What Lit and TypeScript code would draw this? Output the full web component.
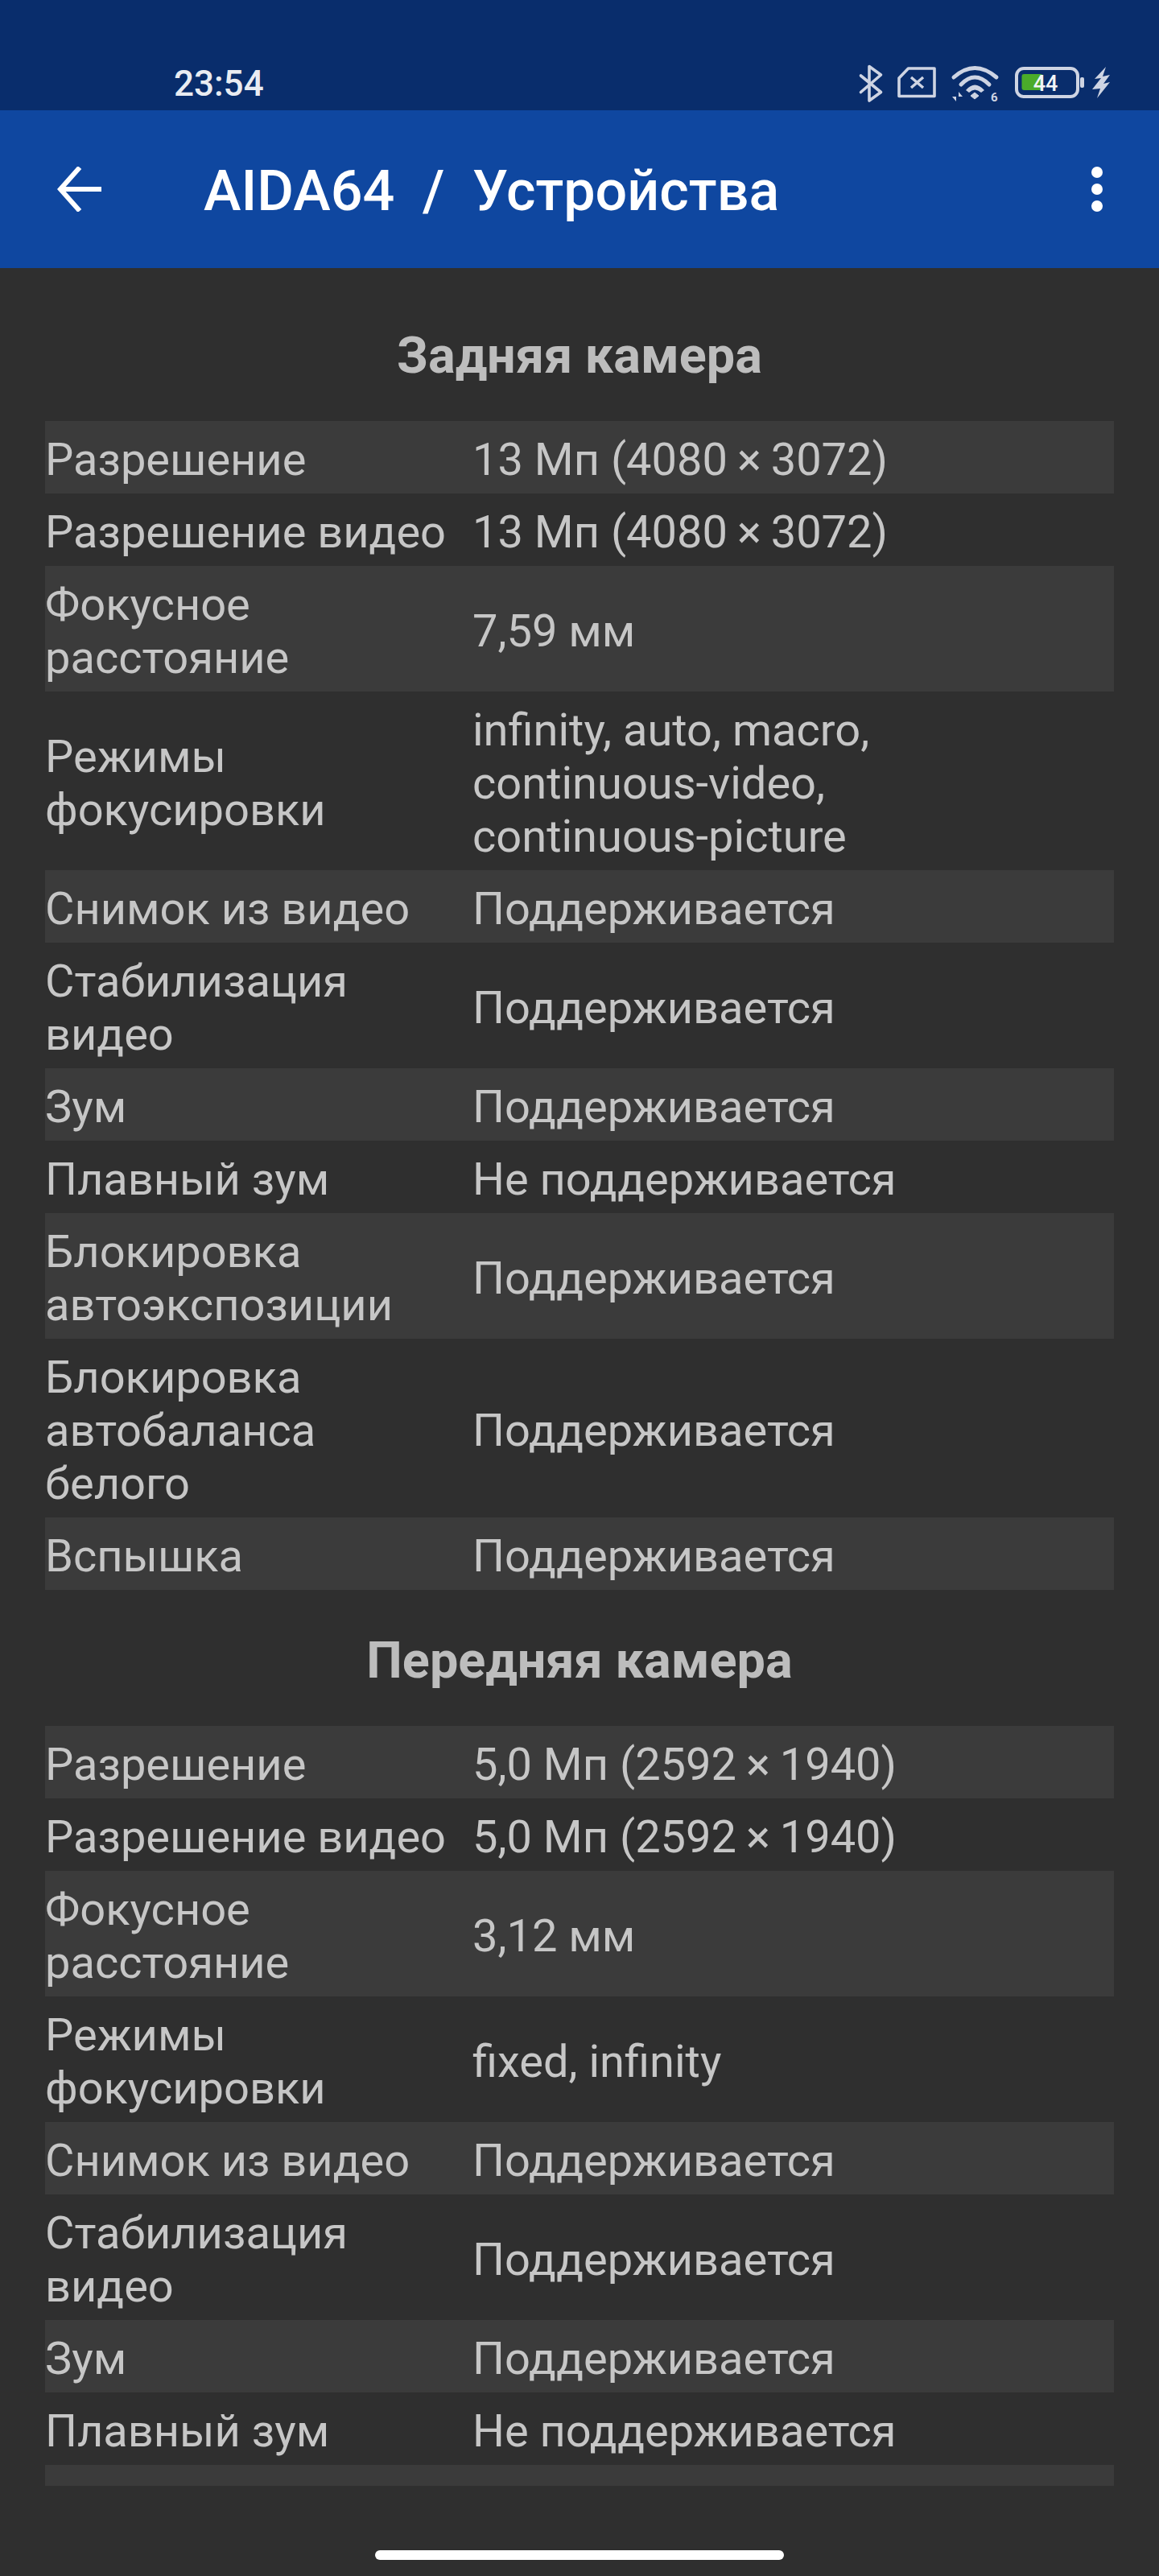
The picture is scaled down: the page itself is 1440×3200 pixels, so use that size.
import { html, css, LitElement, svg } from 'lit'
import { customElement } from 'lit/decorators.js'

const SUP = 'Поддерживается'
const NOSUP = 'Не поддерживается'

const rear = [
    ['Разрешение', '13 Мп (4080 × 3072)'],
    ['Разрешение видео', '13 Мп (4080 × 3072)'],
    ['Фокусное расстояние', '7,59 мм'],
    ['Режимы фокусировки', 'infinity, auto, macro, continuous-video, continuous-picture'],
    ['Снимок из видео', SUP],
    ['Стабилизация видео', SUP],
    ['Зум', SUP],
    ['Плавный зум', NOSUP],
    ['Блокировка автоэкспозиции', SUP],
    ['Блокировка автобаланса белого', SUP],
    ['Вспышка', SUP],
]

const front = [
    ['Разрешение', '5,0 Мп (2592 × 1940)'],
    ['Разрешение видео', '5,0 Мп (2592 × 1940)'],
    ['Фокусное расстояние', '3,12 мм'],
    ['Режимы фокусировки', 'fixed, infinity'],
    ['Снимок из видео', SUP],
    ['Стабилизация видео', SUP],
    ['Зум', SUP],
    ['Плавный зум', NOSUP],
]

const bluetooth = svg`<path d="M1.5 13 L26.5 33.5 L12 44 V1.5 L26.5 12 L1.5 33.5" fill="none" stroke="currentColor" stroke-width="3.6" stroke-linejoin="round" stroke-linecap="round"/>`
const sim = svg`<path d="M2 14 L13.5 2 H46 V36.5 H2 Z" fill="none" stroke="currentColor" stroke-width="3.6" stroke-linejoin="round"/><path d="M17 13 L32 26 M32 13 L17 26" stroke="currentColor" stroke-width="3.4" fill="none"/>`
const wifi = svg`<path d="M2 14 Q28 -9 55 14" fill="none" stroke="currentColor" stroke-width="5" stroke-linecap="round"/><path d="M11 23 Q28 5 46 23" fill="none" stroke="currentColor" stroke-width="5" stroke-linecap="round"/><path d="M17 30 Q28 17 40 30 L36 33 Q28 26 21 33 Z" fill="currentColor"/><path d="M23 37 L28 33 L33 37 L28 41 Z" fill="currentColor" stroke="currentColor" stroke-width="1"/><path d="M5 32 V44 L0 38 H5 Z M8 44 V32 L13 38 H8 Z" fill="currentColor"/><text x="48" y="44" font-family="Roboto, sans-serif" font-size="15" font-weight="700" fill="currentColor">6</text>`
const battery = svg`<rect x="2" y="2" width="76" height="35" rx="9" fill="none" stroke="currentColor" stroke-width="4"/><rect x="81" y="13" width="5" height="13" rx="2" fill="currentColor"/><rect x="8.5" y="9" width="26" height="20" rx="3" fill="#4aab2a"/><text x="38" y="30" text-anchor="middle" font-family="Roboto, sans-serif" font-size="27" font-weight="500" fill="#f2f5f8">44</text>`
const bolt = svg`<path d="M17 0 L3 15 L11 14 L0 28 L10 27 L6 39 L22 19 L14 21 L22 10 L13 12 Z" fill="currentColor"/>`

@customElement('spec-table')
class SpecTable extends LitElement {
    static properties = {
        title: { type: String },
        rows: { type: Array },
    }

    static styles = css`
        :host {
            display: block;
        }
        .head {
            height: 169px;
            padding-top: 53px;
            box-sizing: border-box;
            text-align: center;
            font-size: 63px;
            line-height: 70px;
            font-weight: 700;
            color: #bdbdbd;
        }
        .row {
            display: grid;
            grid-template-columns: 531px 1fr;
            align-items: center;
            padding: 15px 0 9px;
            font-size: 56px;
            line-height: 66px;
            color: #c6c6c6;
        }
        .row:nth-child(odd) {
            background: #3b3b3b;
        }
        .label {
            padding-right: 20px;
        }
        .value {
            padding-right: 60px;
        }
        .times {
            margin: 0 -2px;
        }
        .stub {
            height: 26px;
            padding: 0;
        }
    `

    // the × sits tighter in the original than in Roboto
    value(text) {
        const parts = text.split(' × ')
        if (parts.length < 2) return text
        return html`${parts[0]} <span class="times">×</span> ${parts[1]}`
    }

    render() {
        return html`
            <div class="head">${this.title}</div>
            <div class="rows">
                ${this.rows.map(r => html`
                    <div class="row">
                        <div class="label">${r[0]}</div>
                        <div class="value">${this.value(r[1])}</div>
                    </div>
                `)}
                ${this.hasAttribute('cut') ? html`<div class="row stub"></div>` : ''}
            </div>
        `
    }
}

@customElement('app-root')
class AppRoot extends LitElement {
    static styles = css`
        :host {
            display: block;
            height: 3200px;
            overflow: hidden;
            background: #2f2f2f;
            font-family: Roboto, "Liberation Sans", sans-serif;
        }
        .status {
            height: 137px;
            box-sizing: border-box;
            padding: 81px 60px 0 216px;
            display: flex;
            justify-content: space-between;
            align-items: flex-start;
            background: #092d6c;
            color: #ced4e3;
        }
        .time {
            font-size: 44px;
            line-height: 46px;
            font-weight: 500;
            color: #e9ecf2;
        }
        .icons {
            display: flex;
            align-items: flex-start;
        }
        .icons svg {
            display: block;
            overflow: visible;
        }
        .bt { margin-right: 19px; }
        .sim { margin-top: 2px; margin-right: 20px; }
        .wifi { margin-top: 1px; margin-right: 21px; }
        .bat { margin-top: 2px; margin-right: 10px; }
        .bolt { margin-top: 2px; }
        .bar {
            height: 196px;
            box-sizing: border-box;
            padding: 0 70px 0 71px;
            display: flex;
            align-items: center;
            background: #0f47a0;
            color: #fff;
        }
        .bar svg {
            display: block;
        }
        .title {
            flex: 1;
            margin-left: 126px;
            padding-top: 4px;
            font-size: 70px;
            line-height: 80px;
            font-weight: 500;
            white-space: pre;
        }
        .more {
            display: flex;
            flex-direction: column;
            gap: 7px;
        }
        .more i {
            display: block;
            width: 14px;
            height: 14px;
            border-radius: 50%;
            background: #fff;
        }
        .content {
            padding: 21px 56px 0;
        }
        .home {
            position: absolute;
            left: 466px;
            top: 3168px;
            width: 508px;
            height: 12px;
            border-radius: 6px;
            background: #fff;
        }
    `

    render() {
        return html`
            <div class="status">
                <div class="time">23:54</div>
                <div class="icons">
                    <svg class="bt" width="28" height="45" viewBox="0 0 28 45">${bluetooth}</svg>
                    <svg class="sim" width="48" height="38" viewBox="0 0 48 38">${sim}</svg>
                    <svg class="wifi" width="57" height="44" viewBox="0 0 57 44">${wifi}</svg>
                    <svg class="bat" width="86" height="39" viewBox="0 0 86 39">${battery}</svg>
                    <svg class="bolt" width="23" height="40" viewBox="0 0 23 40">${bolt}</svg>
                </div>
            </div>
            <div class="bar">
                <svg width="56" height="56" viewBox="0 0 56 56">
                    <path d="M55 28 H4 M28 1 L4 28 L28 55" fill="none" stroke="#fff" stroke-width="6"/>
                </svg>
                <div class="title">AIDA64  /  Устройства</div>
                <div class="more"><i></i><i></i><i></i></div>
            </div>
            <div class="content">
                <spec-table .title=${'Задняя камера'} .rows=${rear}></spec-table>
                <spec-table cut .title=${'Передняя камера'} .rows=${front}></spec-table>
            </div>
            <div class="home"></div>
        `
    }
}
